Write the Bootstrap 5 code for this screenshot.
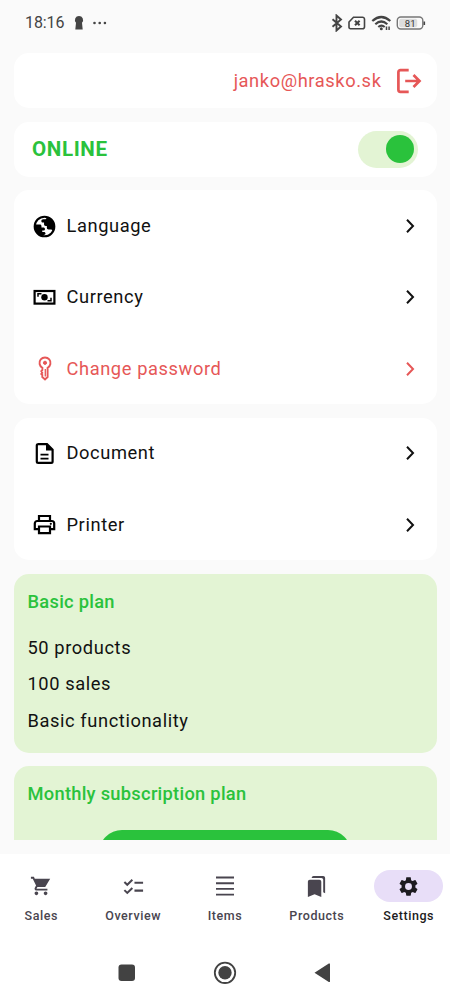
<!DOCTYPE html>
<html lang="en">
<head>
<meta charset="utf-8">
<meta name="viewport" content="width=device-width, initial-scale=1">
<title>Settings</title>
<link href="https://cdn.jsdelivr.net/npm/bootstrap@5.3.0/dist/css/bootstrap.min.css" rel="stylesheet">
<style>
:root{--green:#2ac23c;--pale:#e3f4d4;--red:#e65757}
body{font-family:Roboto,"Liberation Sans",sans-serif;background:#fafafa;color:#111;font-size:18.3px;letter-spacing:.59px;line-height:24px;height:1000px;overflow:hidden}
svg{display:block;flex:none}
.status{height:53px;padding:0 24.5px 7px 25px;font-size:16px;letter-spacing:-.1px;color:#444}
.alert-icon{margin-left:9px}
.content-area{height:787px;padding:0 13.5px;gap:13.7px;overflow:hidden}
.panel{background:#fff;border-radius:15px;flex:none}
.panel-h{height:55px}
.account{padding-right:14px}
.exit{margin-left:13px}
.presence{padding:0 18.5px}
.green{color:var(--green)}
.red{color:var(--red)}
.online{font-size:20.6px;font-weight:700;letter-spacing:.6px}
.toggle{width:60px;height:37px;border-radius:19px;background:var(--pale);padding-right:4.5px}
.knob{width:28px;height:28px;border-radius:50%;background:var(--green)}
.setting{height:71.2px;padding:.5px 18px 0 17.5px}
.ico{width:27px;margin-right:8.5px}
.plan{background:var(--pale);border-radius:15px;padding:16px 14px 0;flex:none}
.plan-basic{height:179px}
.plan-month{height:260px}
.plan-name{font-weight:500;letter-spacing:.28px}
.perks{gap:12.6px;margin-top:22px}
.buy{width:252px;height:46px;border-radius:23px;background:var(--green);border:0;margin-top:24px}
.bottom{height:147px;margin-top:13.5px;background:#fff}
.tabs{gap:9.2px;padding-top:16.6px;font-size:12.5px;font-weight:500;letter-spacing:.57px;line-height:16px;color:#49454f}
.tab{flex:1 1 0;width:0}
.pill{width:69px;height:32px;border-radius:16px;margin-bottom:6.2px}
.tab.on{color:#1d1b20}
.on .pill{background:#e8def8}
.sys{padding:37.2px 1px 0 0;color:#424242}
</style>
</head>
<body>
<header class="status d-flex align-items-center">
  <span>18:16</span>
  <svg class="alert-icon" width="12" height="16" viewBox="0 0 12 16" fill="#444"><path d="M6 1a4 4 0 0 0-3 6.700L2.300 14.600h7.400L9 7.700A4 4 0 0 0 6 1z"/></svg>
  <svg class="ms-2" width="15" height="4" viewBox="0 0 15 4" fill="#444"><circle cx="1.500" cy="2" r="1.300"/><circle cx="6.700" cy="2" r="1.300"/><circle cx="11.900" cy="2" r="1.300"/></svg>
  <svg class="ms-auto" width="96" height="18" viewBox="0 0 96 18" fill="none" stroke="#444" stroke-width="1.600">
    <path d="M2.500 5.200l8.500 7.300-4.500 4V1.500l4.500 4-8.500 7.300" stroke-width="1.900"/>
    <path d="M23.500 3.200h9a2 2 0 0 1 2 2v7.500a2 2 0 0 1-2 2h-12a1.500 1.500 0 0 1-1.500-1.500V8z"/><path d="M25 6.700l4.600 4.600m0-4.600l-4.600 4.600" stroke-width="2"/>
    <path d="M42.300 7q9-8 18 0M45.300 10.200q6-5.400 12 0M48.300 13q3.200-2.600 6.400 0" stroke-width="2.200"/>
    <circle cx="51.300" cy="14.800" r="1.500" fill="#444" stroke="none"/><path d="M56.500 16v-3.500m2.600 0V16" stroke-width="1.500"/>
    <rect x="67.300" y="3" width="25.500" height="12" rx="3.500" stroke="#777" stroke-width="1.400"/><rect x="69.200" y="4.800" width="18" height="8.500" rx="2" fill="#ddd" stroke="none"/>
    <path d="M94.300 7.500v3.500" stroke-width="1.600"/>
    <text x="74.800" y="12.500" font-size="9.500" font-weight="400" letter-spacing="0" fill="#333" stroke="none">81</text>
  </svg>
</header>

<main class="content-area d-flex flex-column">
  <section class="panel panel-h account d-flex align-items-center justify-content-end red">
    <span>janko@hrasko.sk</span>
    <svg class="exit" width="28" height="28" viewBox="0 0 28 28" fill="none" stroke="currentColor" stroke-width="2.700"><path d="M13.700 3.200H5.400a2 2 0 0 0-2 2v17.600a2 2 0 0 0 2 2h8.300M10.200 14h14.500M18.500 8l6 6-6 6"/></svg>
  </section>

  <section class="panel panel-h presence d-flex align-items-center justify-content-between">
    <span class="green online">ONLINE</span>
    <div class="toggle d-flex align-items-center justify-content-end" role="switch" aria-checked="true"><div class="knob"></div></div>
  </section>

  <section class="panel">
    <div class="setting d-flex align-items-center">
      <svg class="ico" height="27" viewBox="0 0 24 24"><circle cx="12" cy="12" r="8.700" fill="none" stroke="#000" stroke-width="1.900"/><path d="M14.600 3.600L13 5.600h-2.200c-.9 0-1.600.7-1.600 1.500s.6 1.400 1.600 1.400h.8v1.600c0 .9.600 1.400 1.500 1.400h1v1.600c0 .9.600 1.500 1.500 1.500h2.100c.7 0 1.200.4 1.500 1.100l.5.900c.9-1.400 1.300-3 1.200-4.900C20.700 7.800 18.300 4.800 14.600 3.600zM3.400 10.200l4.400.1c1 0 1.500.6 1.500 1.500v1h1.600c1 0 1.500.6 1.500 1.400s-.5 1.400-1.400 1.400H10v1.200h1.400c1 0 1.500.6 1.500 1.400s-.6 1.300-1.500 1.300H10l-.4 1C5.400 19 2.700 15 3.400 10.200z"/></svg>
      <span>Language</span><svg class="ms-auto" width="18" height="18" viewBox="0 0 18 18" fill="none" stroke="currentColor" stroke-width="2"><path d="M6 2.800L12 9l-6 6.200"/></svg>
    </div>
    <div class="setting d-flex align-items-center">
      <svg class="ico" height="27" viewBox="0 0 27 27"><rect x="3.600" y="7" width="19.800" height="12.600" fill="none" stroke="#000" stroke-width="2.200"/><circle cx="13.500" cy="13.300" r="3.200"/><path d="M7 12.800v-3h3.500M20 13.800v3h-3.500" fill="none" stroke="#000" stroke-width="1.500"/></svg>
      <span>Currency</span><svg class="ms-auto" width="18" height="18" viewBox="0 0 18 18" fill="none" stroke="currentColor" stroke-width="2"><path d="M6 2.800L12 9l-6 6.200"/></svg>
    </div>
    <div class="setting d-flex align-items-center red">
      <svg class="ico" height="27" viewBox="0 0 27 27" fill="none" stroke="currentColor" stroke-width="1.900"><path d="M11.400 12.800a5.500 5.500 0 1 1 5.200 0V22L14 24.500 11.300 22v-2l-1-1 1-1.200-1-1.600 1-1z"/><circle cx="14" cy="7.800" r="1.600" fill="currentColor" stroke-width="1"/><path d="M14.300 14v7.500" stroke-width="1.300"/></svg>
      <span>Change password</span><svg class="ms-auto" width="18" height="18" viewBox="0 0 18 18" fill="none" stroke="currentColor" stroke-width="2"><path d="M6 2.800L12 9l-6 6.200"/></svg>
    </div>
  </section>

  <section class="panel">
    <div class="setting d-flex align-items-center">
      <svg class="ico" height="27" viewBox="0 0 27 27" fill="none" stroke="#000" stroke-width="2.200"><path d="M7 4.200h9l5.600 5.600V21.500a1.400 1.400 0 0 1-1.400 1.400H7.200a1.400 1.400 0 0 1-1.400-1.400V5.600A1.400 1.400 0 0 1 7.200 4.200z"/><path d="M9.500 14.600h8M9.500 18.600h8" stroke-width="1.900"/><path d="M15 4v6.500h6.500z" fill="#000" stroke="none"/></svg>
      <span>Document</span><svg class="ms-auto" width="18" height="18" viewBox="0 0 18 18" fill="none" stroke="currentColor" stroke-width="2"><path d="M6 2.800L12 9l-6 6.200"/></svg>
    </div>
    <div class="setting d-flex align-items-center">
      <svg class="ico" height="27" viewBox="0 0 27 27" fill="none" stroke="#000" stroke-width="2.200"><path d="M8 10V5h11v5M8 18.200H3.800V12.500a2.500 2.500 0 0 1 2.500-2.500h14.400a2.500 2.500 0 0 1 2.500 2.500v5.700H19M8 15.500h11v6.700H8z"/><circle cx="19.800" cy="12.800" r="1.100" fill="#000" stroke="none"/></svg>
      <span>Printer</span><svg class="ms-auto" width="18" height="18" viewBox="0 0 18 18" fill="none" stroke="currentColor" stroke-width="2"><path d="M6 2.800L12 9l-6 6.200"/></svg>
    </div>
  </section>

  <section class="plan plan-basic">
    <div class="plan-name green">Basic plan</div>
    <div class="perks d-flex flex-column"><span>50 products</span><span>100 sales</span><span>Basic functionality</span></div>
  </section>

  <section class="plan plan-month">
    <div class="plan-name green">Monthly subscription plan</div>
    <button class="buy d-block mx-auto" aria-label="Subscribe"></button>
  </section>
</main>

<footer class="bottom">
  <nav class="tabs d-flex">
    <div class="tab d-flex flex-column align-items-center"><div class="pill d-flex align-items-center justify-content-center"><svg width="22" height="22" viewBox="0 0 24 24" fill="currentColor"><path d="M7 18c-1.100 0-1.990.9-1.990 2S5.900 22 7 22s2-.9 2-2-.9-2-2-2zM1 2v2h2l3.600 7.590-1.350 2.450c-.16.28-.25.61-.25.96 0 1.100.9 2 2 2h12v-2H7.420c-.14 0-.25-.11-.25-.25l.03-.12.9-1.630h8.500L22 4H5.210l-.94-2H1zm16 16c-1.100 0-1.990.9-1.990 2s.89 2 1.990 2 2-.9 2-2-.9-2-2-2z"/></svg></div>Sales</div>
    <div class="tab d-flex flex-column align-items-center"><div class="pill d-flex align-items-center justify-content-center"><svg width="23" height="23" viewBox="0 0 24 24" fill="none" stroke="currentColor" stroke-width="2.100"><path d="M2.500 7.300l3 2.900 5.300-5.200M2.500 15.800l3 2.900 5.300-5.200M13 8h9M13 16.300h9"/></svg></div>Overview</div>
    <div class="tab d-flex flex-column align-items-center"><div class="pill d-flex align-items-center justify-content-center"><svg width="24" height="24" viewBox="0 0 24 24" fill="none" stroke="currentColor" stroke-width="1.900"><path d="M3 3.500h18M3 9.200h18M3 14.900h18M3 20.600h18"/></svg></div>Items</div>
    <div class="tab d-flex flex-column align-items-center"><div class="pill d-flex align-items-center justify-content-center"><svg width="23" height="23" viewBox="0 0 24 24" fill="currentColor"><path d="M19 18l2 1V3c0-1.100-.9-2-2-2H8.990C7.890 1 7 1.900 7 3h10c1.100 0 2 .9 2 2v13zM15 5H5c-1.100 0-2 .9-2 2v16l7-3 7 3V7c0-1.100-.9-2-2-2z"/></svg></div>Products</div>
    <div class="tab on d-flex flex-column align-items-center"><div class="pill d-flex align-items-center justify-content-center"><svg width="23" height="23" viewBox="0 0 24 24" fill="currentColor"><path d="M19.140 12.940c.04-.3.060-.61.060-.94s-.02-.64-.07-.94l2.030-1.580c.18-.14.23-.41.120-.61l-1.920-3.320c-.12-.22-.37-.29-.59-.22l-2.390.96c-.5-.38-1.030-.7-1.620-.94l-.36-2.540c-.04-.24-.24-.41-.48-.41h-3.840c-.24 0-.43.17-.47.41l-.36 2.540c-.59.24-1.130.57-1.620.94l-2.390-.96c-.22-.08-.47 0-.59.22L2.740 8.870c-.12.21-.08.47.12.61l2.030 1.580c-.05.3-.09.63-.09.94s.02.64.070.94l-2.030 1.580c-.18.14-.23.41-.12.610l1.920 3.320c.12.22.37.29.59.22l2.390-.96c.5.38 1.030.7 1.620.94l.36 2.540c.05.24.24.41.48.41h3.840c.24 0 .44-.17.470-.41l.36-2.540c.59-.24 1.130-.56 1.620-.94l2.390.96c.22.080.47 0 .59-.22l1.920-3.320c.12-.22.07-.47-.12-.61l-2.010-1.580zM12 15.600a3.600 3.600 0 1 1 0-7.200 3.600 3.600 0 0 1 0 7.200z"/></svg></div>Settings</div>
  </nav>
  <div class="sys d-flex justify-content-center">
    <svg width="220" height="24" viewBox="0 0 220 24" fill="currentColor"><rect x="3.500" y="3.500" width="16.500" height="16.500" rx="3"/><circle cx="110" cy="11.800" r="10.200" fill="none" stroke="currentColor" stroke-width="1.800"/><circle cx="110" cy="11.800" r="6.700"/><path d="M199.500 11.800L213.800 2.600a.8.800 0 0 1 1.200.8v16.800a.8.800 0 0 1-1.200.8z"/></svg>
  </div>
</footer>
<script src="https://cdn.jsdelivr.net/npm/bootstrap@5.3.0/dist/js/bootstrap.bundle.min.js"></script>
</body>
</html>
